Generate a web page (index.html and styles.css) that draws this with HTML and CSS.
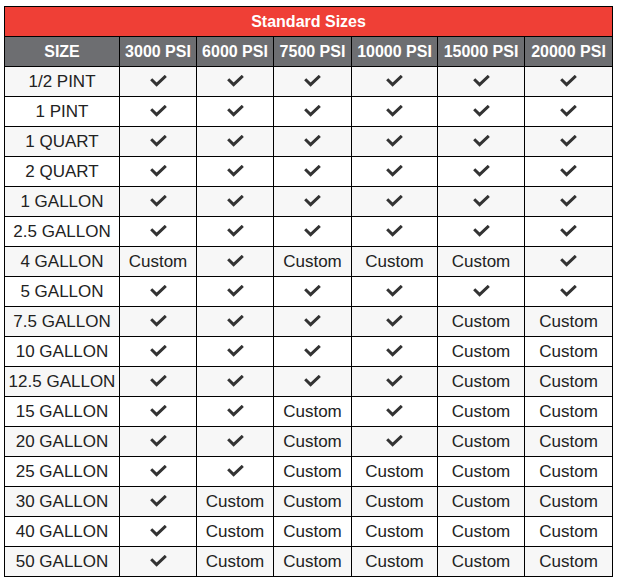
FILE: index.html
```html
<!DOCTYPE html>
<html>
<head>
<meta charset="utf-8">
<link rel="stylesheet" href="styles.css">
</head>
<body>
<table class="sizes">
<colgroup>
<col class="c-size"><col class="c-a"><col class="c-b"><col class="c-c"><col class="c-d"><col class="c-e"><col class="c-f">
</colgroup>
<thead>
<tr><th colspan="7" class="title">Standard Sizes</th></tr>
<tr class="head"><th>SIZE</th><th>3000 PSI</th><th>6000 PSI</th><th>7500 PSI</th><th>10000 PSI</th><th>15000 PSI</th><th>20000 PSI</th></tr>
</thead>
<tbody id="rows"></tbody>
</table>
<script>
var data = [
["1/2 PINT","yyyyyy"],
["1 PINT","yyyyyy"],
["1 QUART","yyyyyy"],
["2 QUART","yyyyyy"],
["1 GALLON","yyyyyy"],
["2.5 GALLON","yyyyyy"],
["4 GALLON","cycccy"],
["5 GALLON","yyyyyy"],
["7.5 GALLON","yyyycc"],
["10 GALLON","yyyycc"],
["12.5 GALLON","yyyycc"],
["15 GALLON","yycycc"],
["20 GALLON","yycycc"],
["25 GALLON","yycccc"],
["30 GALLON","yccccc"],
["40 GALLON","yccccc"],
["50 GALLON","yccccc"]
];
var check = '<svg class="chk" width="17" height="12" viewBox="0 0 17 12"><polyline points="1.2,4.2 6.6,9.6 15.8,0.9" fill="none" stroke="#333" stroke-width="3" stroke-linecap="butt" stroke-linejoin="miter"/></svg>';
var html = '';
data.forEach(function(r){
  html += '<tr><td>' + r[0] + '</td>';
  for (var i = 0; i < 6; i++) {
    html += '<td>' + (r[1][i] === 'y' ? check : 'Custom') + '</td>';
  }
  html += '</tr>';
});
document.getElementById('rows').innerHTML = html;
</script>
</body>
</html>
```
FILE: styles.css
```css
html, body {
  margin: 0;
  padding: 0;
  background: #fff;
}
body {
  padding: 6px 0 0 4px;
  font-family: "Liberation Sans", Arial, sans-serif;
}
.sizes {
  border-collapse: collapse;
  table-layout: fixed;
  width: 608px;
  font-size: 17px;
  color: #222;
}
.c-size { width: 115px; }
.c-a { width: 77px; }
.c-b { width: 77px; }
.c-c { width: 78px; }
.c-d { width: 86px; }
.c-e { width: 87px; }
.c-f { width: 88px; }
.sizes th, .sizes td {
  border: 1px solid #000;
  height: 29px;
  padding: 0;
  text-align: center;
  vertical-align: middle;
  white-space: nowrap;
  line-height: 18px;
}
.sizes th.title {
  background: #ef3f36;
  color: #fff;
  font-weight: bold;
  font-size: 16px;
}
.sizes tr.head th {
  background: #6d6e71;
  color: #fff;
  font-weight: bold;
  font-size: 16px;
}
.sizes tbody tr:nth-child(odd) td {
  background: #f7f7f7;
}
.sizes tbody tr:nth-child(even) td {
  background: #fff;
}
.chk {
  display: inline-block;
  vertical-align: middle;
  margin-top: -3px;
}
```
